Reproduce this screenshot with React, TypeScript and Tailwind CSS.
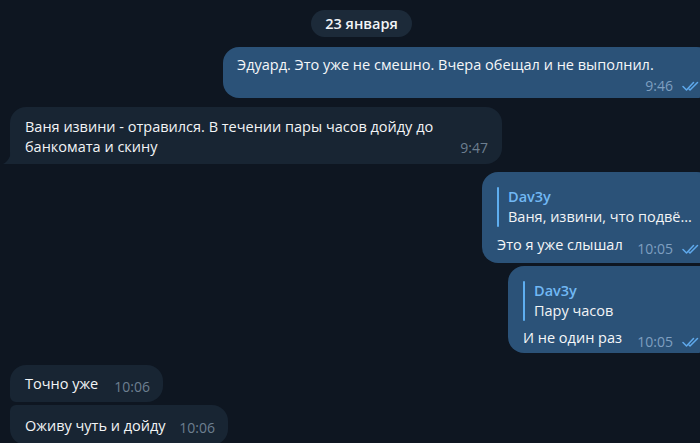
const font = { fontFamily: '"Open Sans", "Noto Sans", sans-serif' };

const Checks = () => (
  <svg width="18" height="10" viewBox="0 0 18 10" fill="none" className="shrink-0">
    <path d="M1 5.5 L4.5 9 L11.5 1.5" stroke="#5fa9ec" strokeWidth="1.5" strokeLinecap="round" strokeLinejoin="round" />
    <path d="M7 8 L8 9 L15.5 1.5" stroke="#5fa9ec" strokeWidth="1.5" strokeLinecap="round" strokeLinejoin="round" />
  </svg>
);

const OutTime = ({ t }: { t: string }) => (
  <div className="flex items-center gap-[9px] shrink-0">
    <span className="text-[14px] leading-4 text-[#7e9fc0]">{t}</span>
    <Checks />
  </div>
);

const InTime = ({ t }: { t: string }) => (
  <span className="text-[14px] leading-4 text-[#6d7f90] shrink-0">{t}</span>
);

const Reply = ({ name, text }: { name: string; text: string }) => (
  <div className="flex gap-[9px]">
    <div className="w-[2px] rounded-full bg-[#5eaef0]" />
    <div className="flex flex-col">
      <span className="text-[14.5px] leading-5 font-semibold text-[#71b8f4]">{name}</span>
      <span className="text-[14.5px] leading-5 text-[#f2f4f6] whitespace-nowrap">{text}</span>
    </div>
  </div>
);

export default function App() {
  return (
    <div className="w-[700px] h-[443px] overflow-hidden bg-[#0e1621]" style={font}>
      <div className="w-[723px] px-[10px] flex flex-col">
        {/* date */}
        <div className="flex justify-center pt-[10px]">
          <div className="h-[27px] px-[14px] flex items-center rounded-full bg-[#1c2a39] text-[14.5px] font-semibold text-[#f2f4f6]">
            23 января
          </div>
        </div>

        {/* out 1 */}
        <div className="self-end mt-[10px] w-[490px] rounded-2xl bg-[#2b5278] pl-[14px] pr-[13px] pt-[8px] pb-[4px] text-[#f5f7f9]">
          <div className="text-[14.5px] leading-5">Эдуард. Это уже не смешно. Вчера обещал и не выполнил.</div>
          <div className="flex justify-end mt-[3px]">
            <OutTime t="9:46" />
          </div>
        </div>

        {/* in 1 */}
        <div className="relative self-start mt-[9px] w-[492px] rounded-2xl rounded-bl-none bg-[#182533] pl-[15px] pr-[14px] pt-[10px] pb-[7px] flex items-end justify-between text-[#f2f4f6]">
          <div className="text-[14.5px] leading-5">
            Ваня извини - отравился. В течении пары часов дойду до
            <br />
            банкомата и скину
          </div>
          <div className="mb-[-2px]">
            <InTime t="9:47" />
          </div>
          <svg width="8" height="12" viewBox="0 0 8 12" className="absolute left-[-7px] bottom-0">
            <path d="M8 0 L8 12 L0 12 C4 10 7 6 8 0 Z" fill="#182533" />
          </svg>
        </div>

        {/* out 2 */}
        <div className="self-end mt-[8px] w-[231px] rounded-2xl rounded-br-md bg-[#2b5278] pl-[15px] pr-[13px] pt-[15px] pb-[8px] text-[#f5f7f9]">
          <Reply name="Dav3y" text="Ваня, извини, что подвё..." />
          <div className="flex items-end justify-between mt-[8px]">
            <span className="text-[14.5px] leading-5">Это я уже слышал</span>
            <div className="mb-[-2px]">
              <OutTime t="10:05" />
            </div>
          </div>
        </div>

        {/* out 3 */}
        <div className="self-end mt-[3px] w-[205px] rounded-2xl rounded-tr-md bg-[#2b5278] pl-[15px] pr-[13px] pt-[15px] pb-[5px] text-[#f5f7f9]">
          <Reply name="Dav3y" text="Пару часов" />
          <div className="flex items-end justify-between mt-[7px]">
            <span className="text-[14.5px] leading-5">И не один раз</span>
            <div className="mb-[-2px]">
              <OutTime t="10:05" />
            </div>
          </div>
        </div>

        {/* in 2 */}
        <div className="self-start mt-[12px] w-[153px] rounded-2xl rounded-bl-md bg-[#182533] pl-[15px] pr-[13px] pt-[9px] pb-[8px] flex items-end justify-between text-[#f2f4f6]">
          <span className="text-[14.5px] leading-5">Точно уже</span>
          <div className="mb-[-4px]">
            <InTime t="10:06" />
          </div>
        </div>

        {/* in 3 */}
        <div className="self-start mt-[3px] w-[218px] rounded-2xl rounded-tl-md bg-[#182533] pl-[15px] pr-[13px] pt-[10px] pb-[9px] flex items-end justify-between text-[#f2f4f6]">
          <span className="text-[14.5px] leading-5">Оживу чуть и дойду</span>
          <div className="mb-[-3px]">
            <InTime t="10:06" />
          </div>
        </div>
      </div>
    </div>
  );
}
